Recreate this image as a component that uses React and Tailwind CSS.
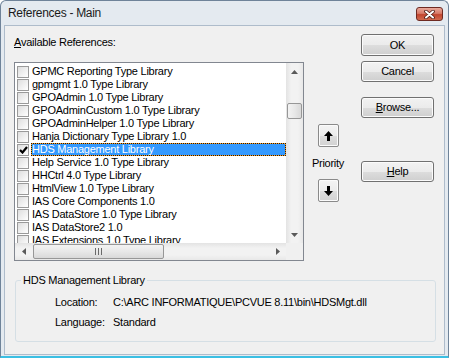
import React from "react";

const items = [
  "GPMC Reporting Type Library",
  "gpmgmt 1.0 Type Library",
  "GPOAdmin 1.0 Type Library",
  "GPOAdminCustom 1.0 Type Library",
  "GPOAdminHelper 1.0 Type Library",
  "Hanja Dictionary Type Library 1.0",
  "HDS Management Library",
  "Help Service 1.0 Type Library",
  "HHCtrl 4.0 Type Library",
  "HtmlView 1.0 Type Library",
  "IAS Core Components 1.0",
  "IAS DataStore 1.0 Type Library",
  "IAS DataStore2 1.0",
  "IAS Extensions 1.0 Type Library",
];

const btn =
  "flex items-center justify-center w-[73px] h-[21px] rounded-[3px] border border-[#707070] bg-[linear-gradient(#f2f2f2_0%,#ebebeb_50%,#dddddd_51%,#cfcfcf_100%)] shadow-[inset_0_0_0_1px_#fbfbfb] text-black";

function Arrow({ dir }) {
  const pts = {
    up: "0,4 7,4 3.5,0",
    down: "0,0 7,0 3.5,4",
    left: "4,0 4,7 0,3.5",
    right: "0,0 0,7 4,3.5",
  }[dir];
  const horiz = dir === "left" || dir === "right";
  return (
    <svg width={horiz ? 4 : 7} height={horiz ? 7 : 4} viewBox={horiz ? "0 0 4 7" : "0 0 7 4"}>
      <polygon points={pts} fill="#5a5a5a" />
    </svg>
  );
}

function Checkbox({ checked }) {
  return (
    <div className="w-[12px] h-[12px] shrink-0 border border-[#9a9a9a] bg-[linear-gradient(135deg,#dedede,#ffffff)] flex items-center justify-center">
      {checked && (
        <svg width="9" height="8" viewBox="0 0 9 8">
          <path d="M1 4 L3.5 6.5 L8 1" stroke="#000" strokeWidth="2.2" fill="none" />
        </svg>
      )}
    </div>
  );
}

function PriorityArrow({ up }) {
  return (
    <div className="w-[21px] h-[23px] rounded-[2px] border border-[#8a8a8a] bg-[linear-gradient(#f4f4f4_0%,#ececec_50%,#dedede_51%,#d2d2d2_100%)] shadow-[inset_0_0_0_1px_#fbfbfb] flex items-center justify-center">
      <svg width="9" height="10" viewBox="0 0 9 10">
        {up ? (
          <path d="M4.5 0 L9 5 L6 5 L6 10 L3 10 L3 5 L0 5 Z" fill="#000" />
        ) : (
          <path d="M4.5 10 L9 5 L6 5 L6 0 L3 0 L3 5 L0 5 Z" fill="#000" />
        )}
      </svg>
    </div>
  );
}

export default function App() {
  return (
    <div className="w-[449px] h-[358px] flex flex-col bg-[#e4eaf0] border border-[#6f8399] border-b-[2px] border-b-[#3bbfe3] rounded-t-[6px] overflow-hidden font-['Liberation_Sans',Arial,sans-serif] text-[11px] leading-[13px] tracking-[-0.25px] text-black">
      {/* title bar */}
      <div className="h-[24px] shrink-0 flex items-start justify-between pl-[7px] pr-[5px]">
        <span className="mt-[5px] text-[12px] leading-[15px] tracking-[-0.3px] text-[#1a1a1a]">References - Main</span>
        <div className="mt-[6px] w-[27px] h-[14px] rounded-[3px] border border-[#6e2a22] bg-[linear-gradient(#e9a99b_0%,#d77a68_45%,#c2452f_55%,#d06a4e_100%)] flex items-center justify-center">
          <svg width="11" height="9" viewBox="0 0 11 9">
            <path d="M2 1.5 L9 7.5 M9 1.5 L2 7.5" stroke="#4a1a14" strokeWidth="3.6" strokeLinecap="round" />
            <path d="M2 1.5 L9 7.5 M9 1.5 L2 7.5" stroke="#ffffff" strokeWidth="2" strokeLinecap="round" />
          </svg>
        </div>
      </div>

      {/* body */}
      <div className="flex-1 mx-[3px] mb-[1px] bg-[#f0f0f0] border border-[#aebccb] flex flex-col">
        <div className="flex items-start pl-[9px] pt-[8px]">
          {/* list column */}
          <div className="flex flex-col pt-[2px]">
            <span>
              <span className="underline">A</span>vailable References:
            </span>
            <div className="mt-[13px] w-[290px] h-[199px] border border-[#828790] bg-white grid grid-cols-[271px_17px] grid-rows-[180px_17px]">
              <div className="overflow-hidden pt-[2px] flex flex-col">
                {items.map((name, i) => (
                  <div key={i} className="flex items-center h-[13px] shrink-0 pl-[2px]">
                    <Checkbox checked={i === 6} />
                    {i === 6 ? (
                      <div className="ml-[2px] flex-1 h-[13px] border border-dotted border-[#1a1a1a] bg-[#ff9e1f]">
                        <div className="h-full bg-[#3399ff] text-white leading-[11px] whitespace-nowrap">{name}</div>
                      </div>
                    ) : (
                      <span className="ml-[3px] whitespace-nowrap">{name}</span>
                    )}
                  </div>
                ))}
              </div>
              {/* vertical scrollbar */}
              <div className="bg-[linear-gradient(90deg,#e3e3e3,#f2f2f2_30%,#f2f2f2_70%,#e8e8e8)] flex flex-col items-center">
                <div className="h-[17px] flex items-center justify-center">
                  <Arrow dir="up" />
                </div>
                <div className="mt-[23px] w-[15px] h-[16px] rounded-[2px] border border-[#979797] bg-[linear-gradient(90deg,#f3f3f3,#e8e8e8_50%,#d9d9d9)]" />
                <div className="flex-1" />
                <div className="h-[17px] flex items-center justify-center">
                  <Arrow dir="down" />
                </div>
              </div>
              {/* horizontal scrollbar */}
              <div className="bg-[linear-gradient(#e3e3e3,#f2f2f2_30%,#f2f2f2_70%,#e8e8e8)] flex items-center">
                <div className="w-[17px] flex justify-center">
                  <Arrow dir="left" />
                </div>
                <div className="ml-[1px] w-[131px] h-[15px] rounded-[2px] border border-[#979797] bg-[linear-gradient(#f3f3f3,#e8e8e8_50%,#d9d9d9)] flex items-center justify-center gap-[2px]">
                  <div className="w-[1px] h-[7px] bg-[#6a6a6a]" />
                  <div className="w-[1px] h-[7px] bg-[#6a6a6a]" />
                  <div className="w-[1px] h-[7px] bg-[#6a6a6a]" />
                </div>
                <div className="flex-1" />
                <div className="w-[17px] flex justify-center">
                  <Arrow dir="right" />
                </div>
              </div>
              <div className="bg-[#f0f0f0]" />
            </div>
          </div>

          {/* priority column */}
          <div className="ml-[7px] w-[34px] mt-[90px] flex flex-col items-center">
            <PriorityArrow up />
            <span className="mt-[10px]">Priority</span>
            <div className="mt-[9px]">
              <PriorityArrow />
            </div>
          </div>

          {/* buttons */}
          <div className="ml-[16px] flex flex-col">
            <div className={btn + " h-[22px] border-[#3c7fb1] shadow-[inset_0_0_0_1px_#8fe0fb]"}>OK</div>
            <div className={btn + " mt-[5px]"}>Cancel</div>
            <div className={btn + " mt-[15px]"}>
              <span>
                <span className="underline">B</span>rowse...
              </span>
            </div>
            <div className={btn + " mt-[43px]"}>
              <span>
                <span className="underline">H</span>elp
              </span>
            </div>
          </div>
        </div>

        {/* group box */}
        <fieldset className="ml-[10px] mt-[13px] w-[421px] border border-[#d5dfe5] rounded-[3px] pb-[12px]">
          <legend className="ml-[5px] px-[2px]">HDS Management Library</legend>
          <div className="mt-[9px] flex pl-[39px]">
            <span className="w-[58px]">Location:</span>
            <span>C:\ARC INFORMATIQUE\PCVUE 8.11\bin\HDSMgt.dll</span>
          </div>
          <div className="mt-[7px] flex pl-[39px]">
            <span className="w-[58px]">Language:</span>
            <span>Standard</span>
          </div>
        </fieldset>
      </div>
    </div>
  );
}
